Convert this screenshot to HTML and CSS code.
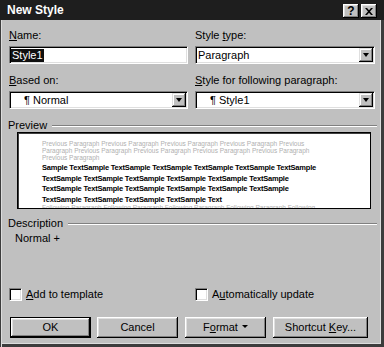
FILE: index.html
```html
<!DOCTYPE html>
<html>
<head>
<meta charset="utf-8">
<link rel="stylesheet" href="styles.css">
</head>
<body>
<div class="dialog">
  <div class="titlebar">
    <span class="title">New Style</span>
    <div class="tbtns">
      <span class="tbtn help">?</span>
      <span class="tbtn close"><svg width="8" height="7" viewBox="0 0 8 7"><path d="M0 0h2l2 2.2L6 0h2L5 3.5 8 7H6L4 4.8 2 7H0l3-3.5z" fill="#000"/></svg></span>
    </div>
  </div>
  <div class="content">
    <div class="grid">
      <div class="field">
        <div class="label"><u>N</u>ame:</div>
        <div class="box"><span class="sel">Style1</span></div>
      </div>
      <div class="field">
        <div class="label">Style <u>t</u>ype:</div>
        <div class="box combo"><span class="val">Paragraph</span><span class="drop"><i class="arrow"></i></span></div>
      </div>
      <div class="field row2">
        <div class="label"><u>B</u>ased on:</div>
        <div class="box combo"><span class="val indent">¶ Normal</span><span class="drop"><i class="arrow"></i></span></div>
      </div>
      <div class="field row2">
        <div class="label"><u>S</u>tyle for following paragraph:</div>
        <div class="box combo"><span class="val indent">¶ Style1</span><span class="drop"><i class="arrow"></i></span></div>
      </div>
    </div>

    <div class="ghead preview-head"><span>Preview</span><span class="rule"></span></div>
    <div class="preview">
      <div class="prev">Previous Paragraph Previous Paragraph Previous Paragraph Previous Paragraph Previous</div>
      <div class="prev">Paragraph Previous Paragraph Previous Paragraph Previous Paragraph Previous Paragraph</div>
      <div class="prev">Previous Paragraph</div>
      <div class="sample first">Sample TextSample TextSample TextSample TextSample TextSample TextSample</div>
      <div class="sample">TextSample TextSample TextSample TextSample TextSample TextSample</div>
      <div class="sample">TextSample TextSample TextSample TextSample TextSample TextSample</div>
      <div class="sample">TextSample TextSample TextSample TextSample Text</div>
      <div class="prev follow">Following Paragraph Following Paragraph Following Paragraph Following Paragraph Following</div>
    </div>

    <div class="ghead desc-head"><span>Description</span><span class="rule"></span></div>
    <div class="desc">Normal +</div>

    <div class="grid checks">
      <label class="check"><span class="cb"></span><span><u>A</u>dd to template</span></label>
      <label class="check"><span class="cb"></span><span>A<u>u</u>tomatically update</span></label>
    </div>

    <div class="buttons">
      <span class="btn default"><span>OK</span></span>
      <span class="btn cancel"><span>Cancel</span></span>
      <span class="btn format"><span>F<u>o</u>rmat <i class="arrow small"></i></span></span>
      <span class="btn shortcut"><span>Shortcut <u>K</u>ey...</span></span>
    </div>
  </div>
</div>
</body>
</html>
```
FILE: styles.css
```css
* { box-sizing: border-box; }
html, body { margin: 0; padding: 0; background: #c0c0c0; }
body { font-family: "Liberation Sans", Arial, sans-serif; font-size: 11px; color: #000; }

.dialog {
  width: 384px;
  height: 347px;
  background: #c0c0c0;
  box-shadow: inset 1px 0 0 #3c3c3c, inset 2px 0 0 #dcdcdc,
              inset -3px -3px 0 #3c3c3c, inset -4px -4px 0 #dcdcdc;
  overflow: hidden;
}

.titlebar {
  height: 20px;
  background: #1e1e1e;
  display: flex;
  align-items: center;
  justify-content: space-between;
  padding: 0 7px 0 7px;
}
.title {
  color: #fff;
  font-weight: bold;
  font-size: 12px;
  line-height: 14px;
}
.tbtns { display: flex; gap: 2px; margin-top: 2px; }
.tbtn {
  width: 16px;
  height: 14px;
  background: #c0c0c0;
  box-shadow: inset -1px -1px #000, inset 1px 1px #fff, inset -2px -2px #808080, inset 2px 2px #dfdfdf;
  display: flex;
  align-items: center;
  justify-content: center;
  font-weight: bold;
  font-size: 12px;
  line-height: 12px;
}

.content { padding: 9px 9px 0 9px; }

.grid {
  display: grid;
  grid-template-columns: 179px 180px;
  column-gap: 7px;
}
.field.row2 { margin-top: 10px; }
.label { line-height: 13px; height: 13px; margin-bottom: 4px; white-space: nowrap; }

.box {
  height: 18px;
  background: #fff;
  border: 1px solid;
  border-color: #808080 #fff #fff #808080;
  box-shadow: inset 1px 1px #000, inset -1px -1px #dfdfdf;
  display: flex;
  align-items: center;
  padding: 1px;
  line-height: 14px;
}
.sel {
  background: #101010;
  color: #fff;
  line-height: 13px;
  padding: 0 1px;
}
.combo { justify-content: space-between; }
.val { padding-left: 1px; white-space: nowrap; }
.val.indent { padding-left: 13px; }
.drop {
  width: 14px;
  height: 14px;
  background: #c0c0c0;
  box-shadow: inset -1px -1px #000, inset 1px 1px #dfdfdf, inset -2px -2px #808080, inset 2px 2px #fff;
  display: flex;
  align-items: center;
  justify-content: center;
}
.arrow {
  display: inline-block;
  width: 0;
  height: 0;
  border-left: 3.5px solid transparent;
  border-right: 3.5px solid transparent;
  border-top: 4px solid #000;
}
.arrow.small {
  border-left-width: 3px;
  border-right-width: 3px;
  border-top-width: 3px;
  vertical-align: 3px;
  margin-left: 1px;
}

.ghead {
  display: flex;
  align-items: center;
  height: 13px;
  line-height: 13px;
  margin-left: -1px;
  margin-right: -2px;
}
.preview-head { margin-top: 10px; }
.desc-head { margin-top: 8px; }
.rule {
  flex: 1;
  height: 2px;
  margin-left: 5px;
  border-top: 1px solid #808080;
  border-bottom: 1px solid #fff;
}

.preview {
  margin: 0 4px 0 8px;
  height: 77px;
  background: #fff;
  border: 1px solid #000;
  box-shadow: inset 1px 1px #404040;
  padding: 7px 0 0 24px;
  overflow: hidden;
  white-space: nowrap;
}
.prev {
  color: #b0b0b0;
  font-size: 6.5px;
  line-height: 7px;
  height: 7px;
}
.sample {
  font-size: 7.5px;
  font-weight: bold;
  letter-spacing: -0.2px;
  line-height: 10.5px;
  height: 10.5px;
}
.sample.first { margin-top: 2px; }
.prev.follow { margin-top: -1px; }

.desc { margin-top: 2px; padding-left: 6px; line-height: 13px; height: 13px; }

.checks { margin-top: 43px; }
.check { display: flex; align-items: center; gap: 4px; line-height: 13px; height: 13px; }
.cb {
  width: 13px;
  height: 13px;
  background: #fff;
  border: 1px solid;
  border-color: #808080 #fff #fff #808080;
  box-shadow: inset 1px 1px #000, inset -1px -1px #dfdfdf;
}

.buttons {
  margin-top: 16px;
  display: flex;
  padding-left: 1px;
  gap: 7px;
}
.btn {
  height: 21px;
  width: 81px;
  background: #c0c0c0;
  box-shadow: inset -1px -1px #000, inset 1px 1px #fff, inset -2px -2px #808080, inset 2px 2px #dfdfdf;
  display: flex;
  align-items: center;
  justify-content: center;
  line-height: 13px;
  white-space: nowrap;
}
.btn.default { border: 1px solid #000; }
.btn.cancel { margin-left: -1px; }
.btn.shortcut { width: 95px; }
```
